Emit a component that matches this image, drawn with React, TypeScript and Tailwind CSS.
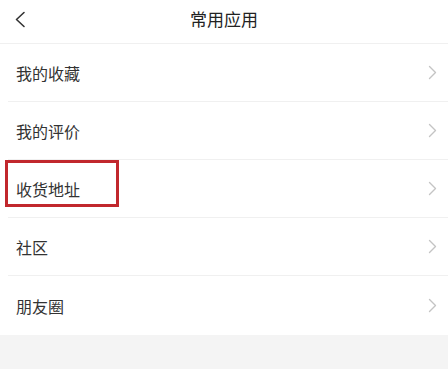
import React from "react";

const items = ["我的收藏", "我的评价", "收货地址", "社区", "朋友圈"];

function Chevron() {
  return (
    <svg width="9" height="15" viewBox="0 0 9 15" fill="none" className="shrink-0">
      <path d="M1.5 1.5L7.5 7.5L1.5 13.5" stroke="#c4c4c4" strokeWidth="1.4" strokeLinecap="round" strokeLinejoin="round" />
    </svg>
  );
}

export default function App() {
  return (
    <div
      className="w-[448px] h-[369px] bg-[#f4f4f4] overflow-hidden"
      style={{ fontFamily: '"Noto Sans CJK SC", "Noto Sans", sans-serif' }}
    >
      {/* header */}
      <div className="relative h-[44px] bg-white border-b border-[#f0f0f0] flex items-center justify-center">
        <svg width="12" height="17" viewBox="0 0 12 17" fill="none" className="absolute left-[14px] top-[11px]">
          <path d="M10 1.5L2.5 8.5L10 15.5" stroke="#333333" strokeWidth="1.6" strokeLinecap="round" strokeLinejoin="round" />
        </svg>
        <span className="text-[17px] text-[#222222] leading-none -mt-[6px]">常用应用</span>
      </div>

      {/* list */}
      <div className="bg-white">
        {items.map((label, i) => (
          <div key={label} className="relative pl-[8px]">
            <div
              className={`flex items-center justify-between h-[58px] pl-[8px] pr-[11px] ${
                i < items.length - 1 ? "border-b border-[#f0f0f0]" : "h-[59px]"
              }`}
            >
              <span className="text-[16px] text-[#333333] leading-none">{label}</span>
              <Chevron />
            </div>
            {label === "收货地址" && (
              <div className="absolute left-[5px] top-0 w-[114px] h-[47px] border-[3px] border-[#c1272d] pointer-events-none" />
            )}
          </div>
        ))}
      </div>
    </div>
  );
}
